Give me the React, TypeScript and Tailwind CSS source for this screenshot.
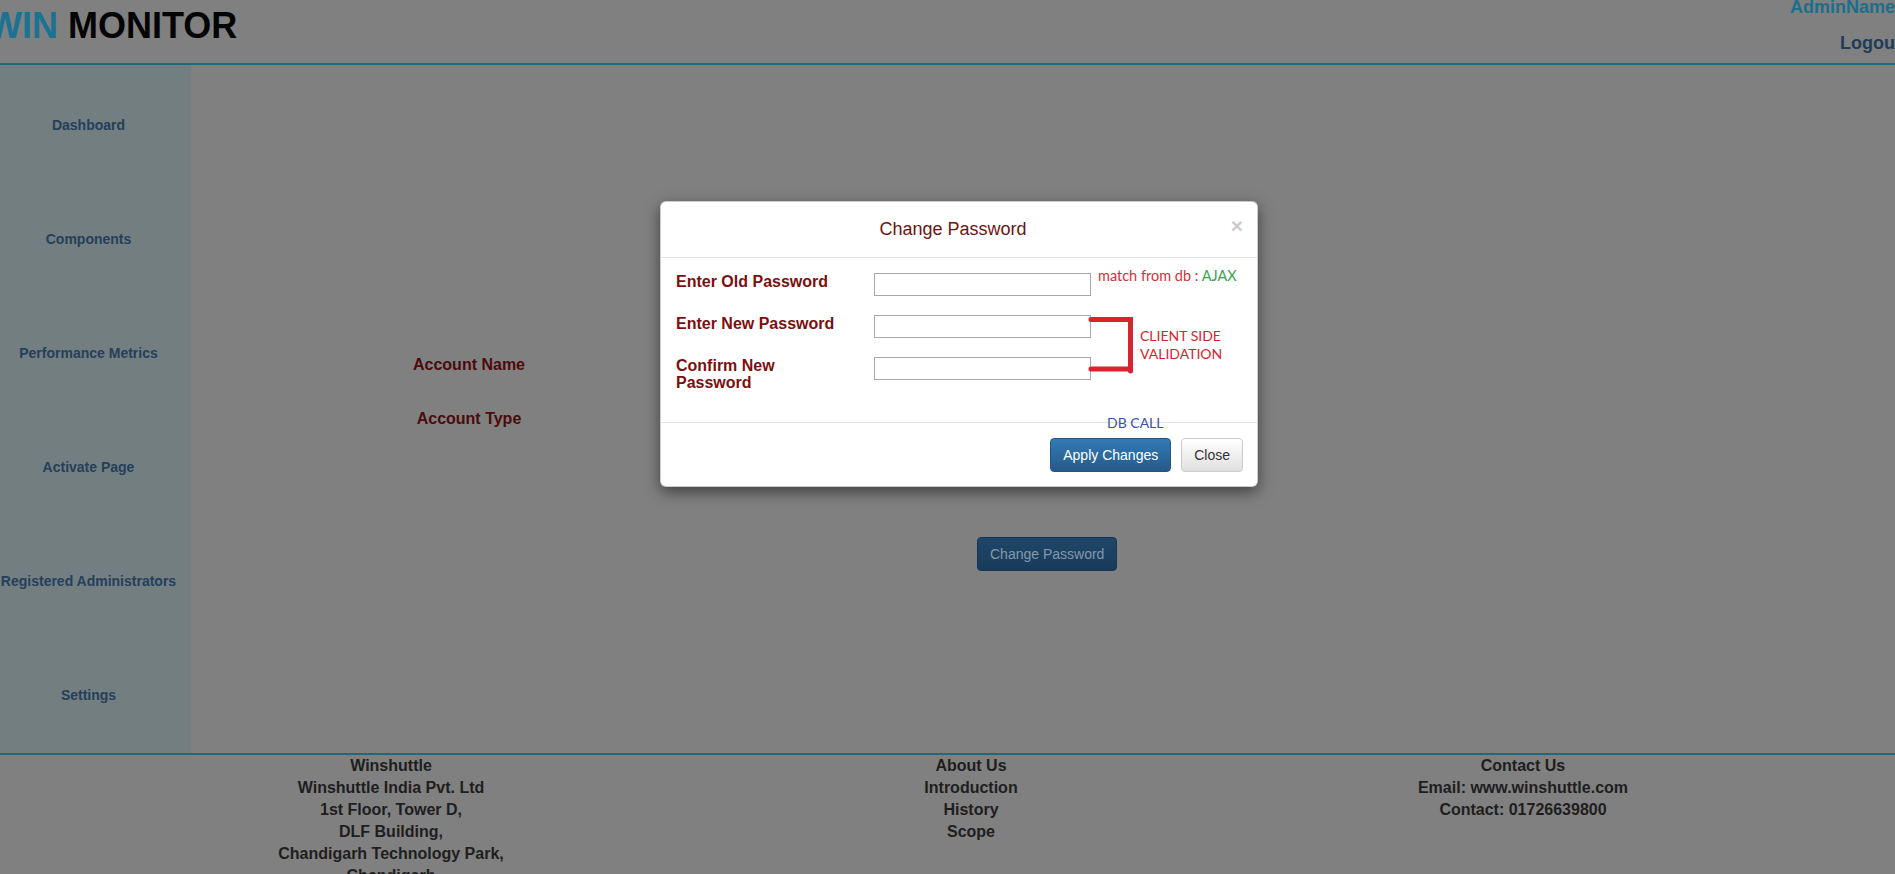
import React from 'react';

const sideItems = [
  'Dashboard',
  'Components',
  'Performance Metrics',
  'Activate Page',
  'Registered Administrators',
  'Settings',
];

const footerCols = [
  ['Winshuttle', 'Winshuttle India Pvt. Ltd', '1st Floor, Tower D,', 'DLF Building,', 'Chandigarh Technology Park,', 'Chandigarh'],
  ['About Us', 'Introduction', 'History', 'Scope'],
  ['Contact Us', 'Email: www.winshuttle.com', 'Contact: 01726639800'],
];

function Header() {
  return (
    <div className="h-[65px] border-b-2 border-[#1d6a80] flex justify-between">
      <div className="mt-[-1px] ml-[-12px] text-[36px] font-bold leading-normal whitespace-nowrap">
        <span className="text-[#1a7393]">WIN</span>{' '}
        <span className="text-[#040404]">MONITOR</span>
      </div>
      <div className="flex flex-col items-end mr-[-6px] mt-[-6px] text-[18px] font-bold leading-normal">
        <span className="text-[#1b6f8b] mr-[6px]">AdminName</span>
        <span className="text-[#203c5a] mt-[9px]">Logout</span>
      </div>
    </div>
  );
}

function Sidebar() {
  return (
    <div className="w-[191px] h-[688px] bg-[#727e80] pt-[3px] shrink-0">
      {sideItems.map((item) => (
        <div key={item} className="h-[114px] w-[177px] flex items-center justify-center">
          <span className="text-[14px] font-bold text-[#263f5c] whitespace-nowrap">{item}</span>
        </div>
      ))}
    </div>
  );
}

function MainContent() {
  return (
    <div className="flex-1 flex flex-col items-start pt-[291px]">
      <div className="ml-[178px] w-[200px] text-center text-[16px] leading-[18px] font-bold text-[#4d0b0b]">
        Account Name
      </div>
      <div className="ml-[178px] mt-[36px] w-[200px] text-center text-[16px] leading-[18px] font-bold text-[#4d0b0b]">
        Account Type
      </div>
      <button className="ml-[786px] mt-[109px] h-[34px] px-3 rounded-[4px] border border-[#163454] bg-gradient-to-b from-[#1e4769] to-[#193b5a] text-[14px] text-[#8797a8]">
        Change Password
      </button>
    </div>
  );
}

function Footer() {
  return (
    <div className="border-t-2 border-[#1d6a80] grid grid-cols-[782px_378px_726px]">
      {footerCols.map((col, i) => (
        <div key={i} className="flex flex-col items-center text-[16px] font-bold leading-[22px] text-[#1e1e1e]">
          {col.map((line) => (
            <span key={line} className="whitespace-nowrap">{line}</span>
          ))}
        </div>
      ))}
    </div>
  );
}

function Field({ label }: { label: string }) {
  return (
    <div className="flex items-start">
      <div className="w-[198px] pr-[28px] text-[16px] font-bold leading-[17px] text-[#7b0f0f]">
        {label}
      </div>
      <input className="w-[217px] h-[23px] border border-[#a9a9a9] bg-white outline-none" />
    </div>
  );
}

function PasswordModal() {
  return (
    <div className="absolute left-[660px] top-[201px] w-[598px] bg-white rounded-[6px] border border-black/20 shadow-[0_5px_15px_rgba(0,0,0,0.5)]">
      <div className="relative h-[56px] border-b border-[#e5e5e5] flex items-center justify-center pr-[12px]">
        <span className="text-[18px] text-[#6b1515]">Change Password</span>
        <span className="absolute right-[14px] top-[13px] text-[21px] font-bold leading-none text-[#cccccc]">×</span>
      </div>
      <div className="pt-[15px] pl-[15px] pb-[31px] flex flex-col gap-[19px]">
        <Field label="Enter Old Password" />
        <Field label="Enter New Password" />
        <Field label="Confirm New Password" />
      </div>
      <div className="border-t border-[#e5e5e5] pt-[15px] pb-[14px] pr-[14px] flex justify-end">
        <button className="h-[34px] px-3 rounded-[4px] border border-[#245580] bg-gradient-to-b from-[#337ab7] to-[#265a88] text-[14px] text-white">
          Apply Changes
        </button>
        <button className="ml-[10px] h-[34px] px-3 rounded-[4px] border border-[#cccccc] bg-gradient-to-b from-white to-[#e0e0e0] text-[14px] text-[#333333]">
          Close
        </button>
      </div>

      <div className="absolute left-[437px] top-[63px] font-['Lato',sans-serif] text-[14.5px] whitespace-nowrap text-[#d2323a]">
        match from db : <span className="text-[#3ea34d]">AJAX</span>
      </div>
      <svg className="absolute left-[426px] top-[113px]" width="50" height="62" viewBox="0 0 50 62">
        <path d="M4 4.5 H43.5 V56 M43.5 54 H4" fill="none" stroke="#d9232d" strokeWidth="5" strokeLinecap="round" strokeLinejoin="miter" />
      </svg>
      <div className="absolute left-[479px] top-[125px] font-['Lato',sans-serif] text-[14px] leading-[18px] text-[#d9232d] whitespace-nowrap">
        CLIENT SIDE
        <br />
        VALIDATION
      </div>
      <div className="absolute left-[446px] top-[210px] font-['Lato',sans-serif] text-[14px] text-[#3b4fb5] whitespace-nowrap">
        DB CALL
      </div>
    </div>
  );
}

export default function App() {
  return (
    <div className="relative w-[1895px] h-[874px] overflow-hidden bg-[#808080] font-['Liberation_Sans',Arial,sans-serif]">
      <Header />
      <div className="flex">
        <Sidebar />
        <MainContent />
      </div>
      <Footer />
      <PasswordModal />
    </div>
  );
}
